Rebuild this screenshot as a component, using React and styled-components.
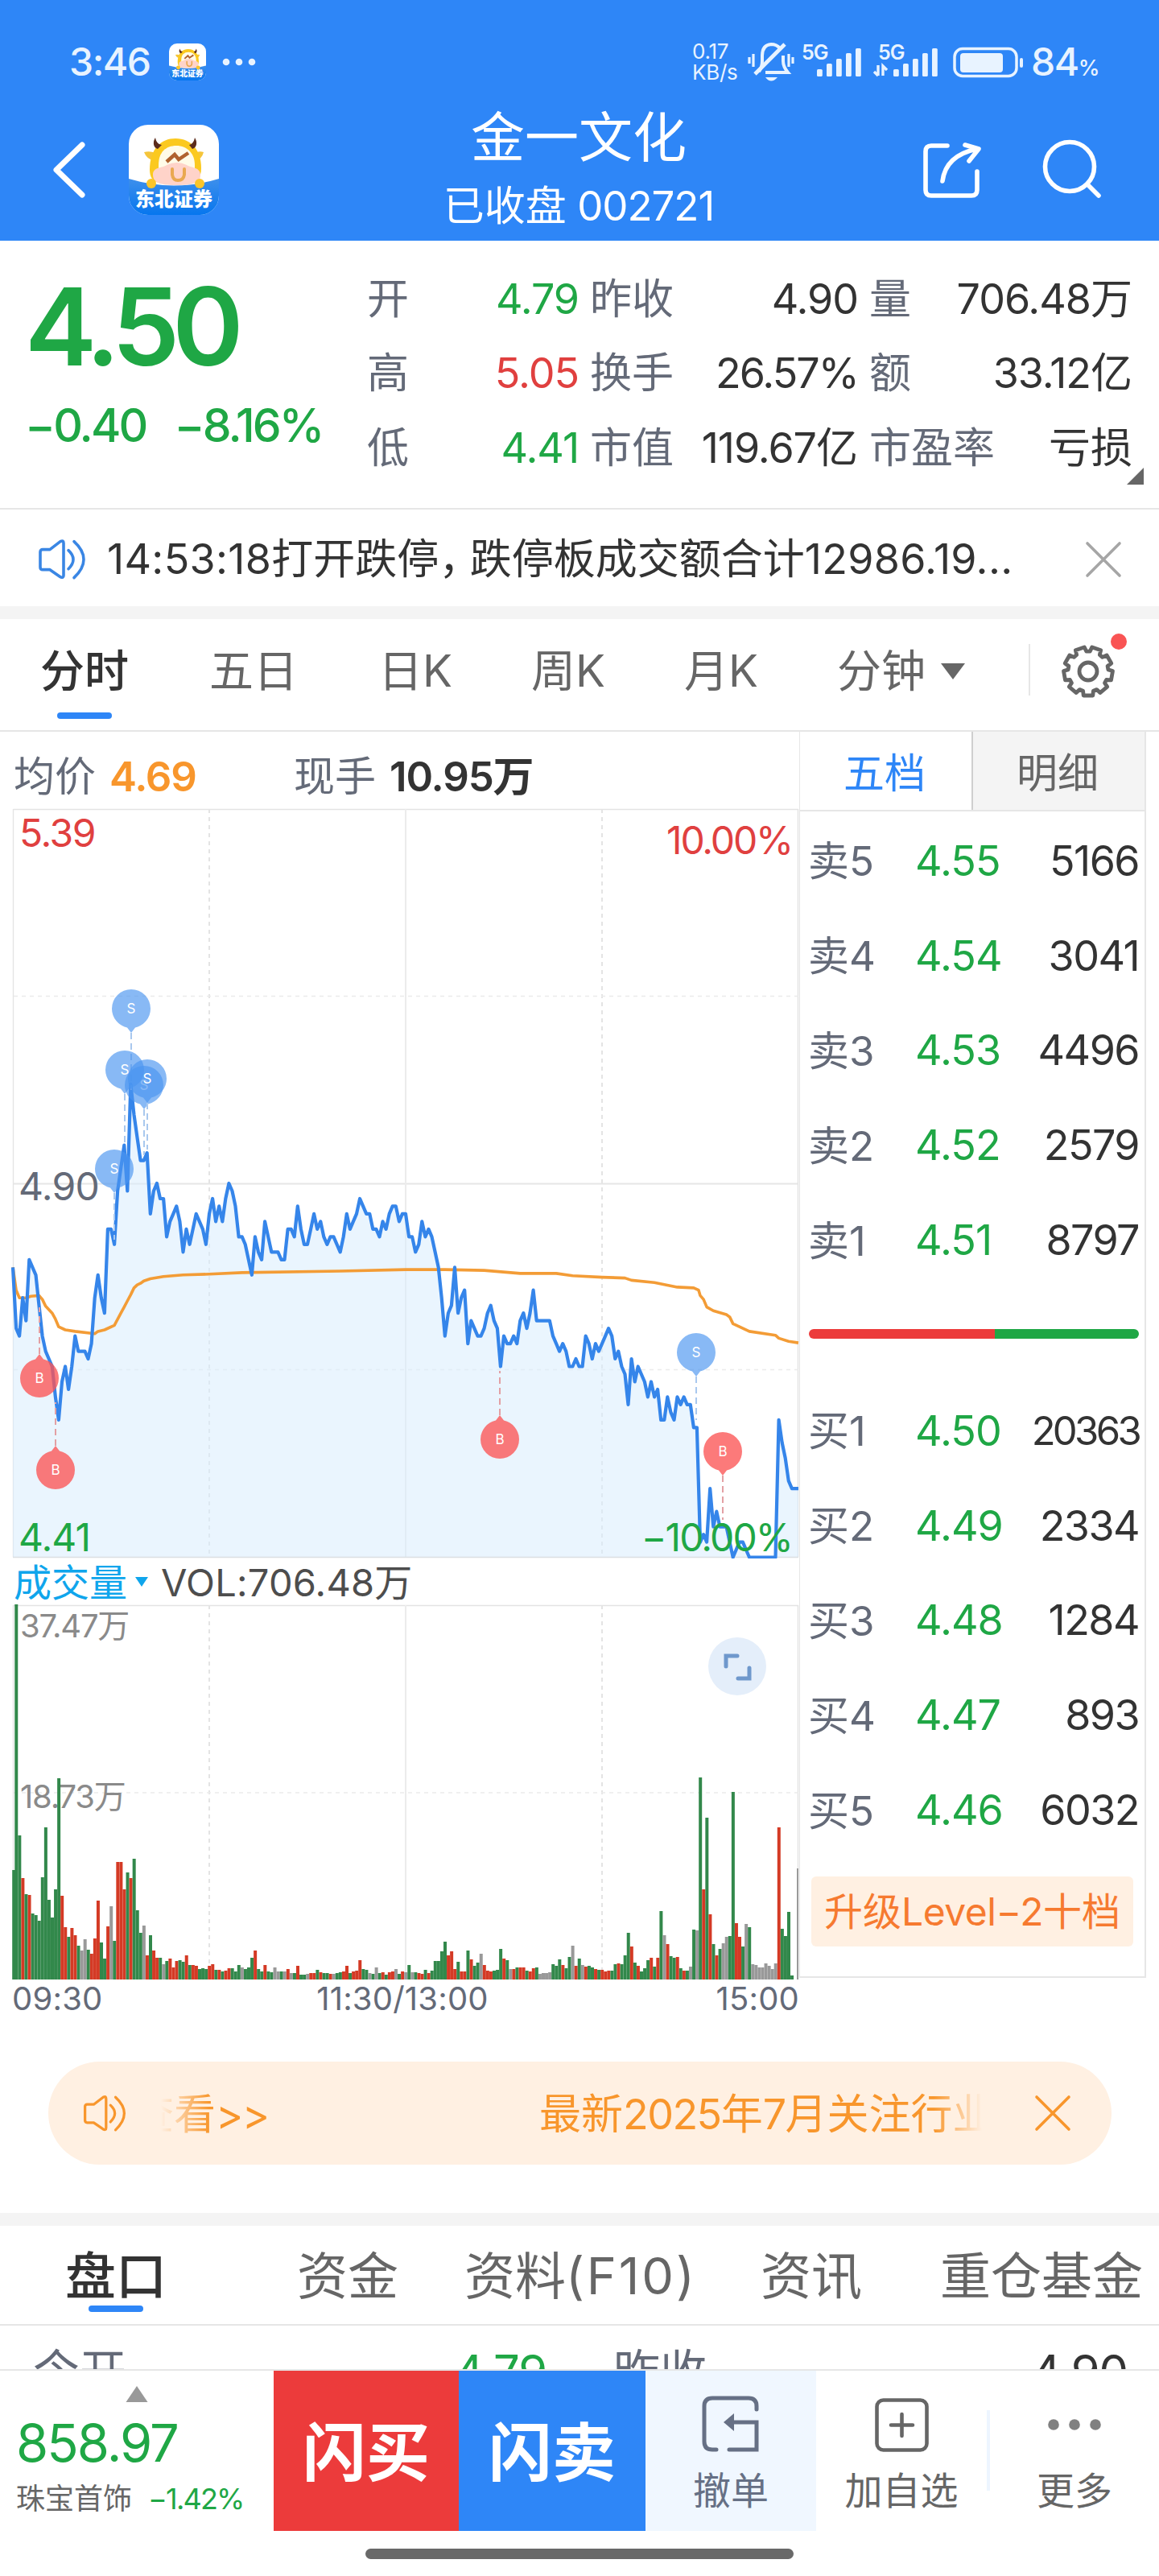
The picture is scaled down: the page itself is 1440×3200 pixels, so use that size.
import styled, { createGlobalStyle } from "styled-components";

const GlobalStyle = createGlobalStyle`
    * {
        box-sizing: border-box;
        margin: 0;
        padding: 0;
    }

    body {
        background: #fff;
        font-family: "Inter", "Noto Sans CJK SC", sans-serif;
        color: #333;
    }
`;

const colors = {
    blue: "#2e86f7",
    green: "#1fa745",
    red: "#e0403f",
    label: "#646a78",
    text: "#333333",
    grey: "#666666",
    line: "#e6e6e6",
    band: "#f4f4f4",
    orange: "#f8962c",
};

/* cents above / below yesterday's close, one value per minute */
const PRICES = [
    -11, -19, -20, -15, -18, -10, -11, -12, -16, -20, -22, -23, -24, -28, -31, -26, -24, -27, -24, -20,
    -22, -22, -22, -23, -21, -15, -12, -15, -17, -6, -6, -8, -1, 2, 5, -1, 13, 9, 6, 3,
    3, 4, -4, -1, 0, -2, -2, -7, -5, -4, -3, -5, -9, -6, -8, -6, -4, -5, -6, -8,
    -4, -2, -5, -3, -5, -2, 0, -1, -3, -7, -7, -8, -10, -12, -7, -9, -10, -5, -7, -9,
    -9, -9, -10, -10, -6, -6, -7, -3, -6, -8, -8, -6, -4, -6, -5, -7, -8, -7, -7, -8,
    -9, -7, -4, -6, -5, -4, -2, -3, -4, -4, -6, -6, -7, -5, -6, -4, -3, -3, -5, -4,
    -4, -7, -7, -9, -8, -5, -7, -6, -7, -9, -11, -15, -20, -17, -16, -11, -17, -15, -14, -21,
    -18, -19, -20, -20, -19, -17, -16, -18, -19, -24, -20, -21, -21, -20, -21, -18, -17, -19, -17, -14,
    -18, -18, -18, -18, -18, -20, -21, -22, -21, -22, -24, -24, -23, -24, -24, -20, -21, -23, -21, -22,
    -21, -20, -19, -20, -23, -22, -24, -25, -29, -23, -26, -24, -25, -26, -28, -26, -28, -27, -31, -31,
    -28, -30, -31, -28, -29, -28, -29, -29, -32, -32, -47, -46, -47, -40, -45, -43, -45, -45, -45, -47,
    -49, -48, -47, -47, -48, -49, -49, -49, -49, -49, -49, -49, -49, -49, -31, -34, -36, -39, -40, -40,
    -40,
];

const AVERAGE = [
    [0, -11], [1, -14], [2, -15], [4, -15], [5.5, -14.8], [8, -14.7], [9, -15.2], [10, -16.1], [12, -17],
    [13, -17.8], [14, -18.8], [16, -19.2], [19, -19.4], [25, -19.7], [26, -19.4], [28, -19.2], [31, -18.6],
    [33, -17], [34, -16.2], [35, -15.4], [36, -14.6], [37, -13.7], [38, -13.3], [39, -13.1], [40, -12.8],
    [42, -12.5], [46, -12.2], [52, -12], [60, -11.9], [70, -11.7], [100, -11.5], [120, -11.3], [132, -11.3],
    [144, -11.4], [155, -11.8], [166, -11.8], [171, -12.1], [180, -12.3], [187, -12.4], [189, -12.7],
    [196, -13], [203, -13.6], [208, -13.7], [209.5, -14], [210, -14.7], [211, -15.2], [212, -16.2],
    [214, -16.7], [218, -17.2], [219, -17.5], [220, -18.4], [222, -18.8], [225, -19.4], [233, -19.9],
    [234, -20.3], [237, -20.7], [240, -20.9],
];

/* g = down minute, r = up minute, y = flat */
const VOLUMES = `
    g136 g467 g179 r126 g106 r105 g82 g80 g73 g127 g189 g99 g77 g112 g250 r104 r65 g53 r64 r55
    g42 y36 y50 g37 r32 r51 r98 g46 g26 r66 y91 g48 r146 r146 r112 g133 r126 g150 g86 g58
    y67 r30 g55 r36 r27 g27 y19 g23 r26 r15 r23 g24 g22 r30 g18 r18 r17 g13 g14 g13
    r17 r19 g12 r12 g10 r11 r14 g14 g10 g18 y15 g13 g15 g27 r36 g13 g10 r18 g10 g9
    y15 y10 g10 y10 r13 y8 g8 r17 g6 g6 y7 r8 r8 g12 r9 g8 g8 r7 y7 g8
    g9 r10 r17 g8 r10 r11 r24 g13 g12 y8 g7 y15 g8 r9 g6 r9 r10 y13 g7 r10
    y9 g18 y9 g9 r8 r7 g12 r8 g11 g23 g23 g35 g47 r30 r35 r13 g22 r10 r10 g36
    r25 g17 g21 y32 r18 r11 r10 g11 g12 g38 r26 g24 y13 r13 g15 r15 r15 g11 r10 r14
    g15 y7 y8 y8 y9 g19 g17 g25 r18 g14 g28 y42 r17 g26 y18 r16 g17 g15 r13 g12
    r12 r10 r11 g11 g19 r20 g19 g30 g58 r41 g21 r17 g10 g14 g24 r27 g16 r27 g85 y55
    r44 g29 g27 r28 g14 r11 g11 y16 g62 y61 g251 r112 g201 r81 g44 r30 g38 y45 y53 g54
    g233 r70 r53 g41 y69 g65 y19 y18 y15 y15 y20 y17 y13 y20 r189 g63 g54 g84 g5 g0
    y138
`.trim().split(/\s+/);

const BAR_FILL = { g: "#32884b", r: "#d43a25", y: "#999999" };

const MARKERS = [
    { type: "S", x: 163, y: 249, end: 350 },
    { type: "S", x: 155, y: 325, end: 418 },
    { type: "S", x: 179, y: 344, end: 431 },
    { type: "S", x: 183, y: 336, end: 424 },
    { type: "S", x: 142, y: 448, end: 536 },
    { type: "B", x: 49, y: 708, end: 620 },
    { type: "B", x: 69, y: 822, end: 738 },
    { type: "B", x: 621, y: 784, end: 699 },
    { type: "S", x: 865, y: 676, end: 760 },
    { type: "B", x: 898, y: 799, end: 884 },
];

const STATS = [
    ["开", "4.79", "green"], ["昨收", "4.90"], ["量", "706.48万"],
    ["高", "5.05", "red"], ["换手", "26.57%"], ["额", "33.12亿"],
    ["低", "4.41", "green"], ["市值", "119.67亿"], ["市盈率", "亏损"],
];

const SELLS = [["卖5", "4.55", "5166"], ["卖4", "4.54", "3041"], ["卖3", "4.53", "4496"], ["卖2", "4.52", "2579"], ["卖1", "4.51", "8797"]];
const BUYS = [["买1", "4.50", "20363"], ["买2", "4.49", "2334"], ["买3", "4.48", "1284"], ["买4", "4.47", "893"], ["买5", "4.46", "6032"]];

const Page = styled.div`
    width: 1440px;
    height: 3200px;
    display: flex;
    flex-direction: column;
    overflow: hidden;
    background: #fff;
    white-space: nowrap;
    line-height: 1;
`;

const Latin = styled.span`
    letter-spacing: -0.03em;
`;

/* tightens digits and latin letters, leaves the Chinese characters alone */
const Txt = ({ children }) =>
    String(children)
        .split(/([\x20-\x7e−]+)/)
        .filter(Boolean)
        .map((part, i) => (/[\x20-\x7e−]/.test(part) ? <Latin key={i}>{part}</Latin> : part));

/* ---------- header ---------- */

const Header = styled.header`
    height: 299px;
    background: ${colors.blue};
    color: #fff;
    flex: none;
`;

const StatusBar = styled.div`
    height: 124px;
    padding: 30px 75px 0 86px;
    display: flex;
    align-items: center;
    color: #e8f3ff;

    svg {
        display: block;
        overflow: visible;
    }
`;

const Clock = styled.span`
    width: 124px;
    font-size: 48px;
    font-weight: 500;
`;

const StatusRight = styled.div`
    margin-left: auto;
    display: flex;
    align-items: center;
`;

const Speed = styled.div`
    width: 69px;
    font-size: 26px;
    line-height: 26px;
    letter-spacing: -0.01em;
`;

const Battery = styled.div`
    display: flex;
    align-items: baseline;
    font-size: 48px;
    font-weight: 500;
    margin-left: 10px;

    small {
        font-size: 27px;
        letter-spacing: -0.06em;
    }
`;

const TitleBar = styled.div`
    height: 175px;
    padding: 0 69px 0 64px;
    display: grid;
    grid-template-columns: 480px 1fr 477px;

    svg {
        display: block;
    }
`;

const TitleSide = styled.div`
    display: flex;
    padding-top: 31px;
    gap: ${(p) => p.$gap};
    justify-content: ${(p) => (p.$right ? "flex-end" : "flex-start")};
`;

const Title = styled.div`
    display: flex;
    flex-direction: column;
    align-items: center;
    padding-top: 2px;

    h1 {
        font-size: 67px;
        line-height: 90px;
        font-weight: 400;
    }

    p {
        font-size: 51px;
        line-height: 80px;
    }

    ${Latin} {
        letter-spacing: -0.02em;
    }
`;

const AppLogo = ({ size }) => (
    <svg width={size} height={size} viewBox="0 0 112 112">
        <defs>
            <clipPath id={`logo${size}`}>
                <rect width="112" height="112" rx="24" />
            </clipPath>
            <linearGradient id={`sea${size}`} x1="0" y1="0" x2="0" y2="1">
                <stop offset="0" stopColor="#3d8fec" />
                <stop offset="1" stopColor="#0676ee" />
            </linearGradient>
        </defs>
        <g clipPath={`url(#logo${size})`}>
            <rect width="112" height="112" fill="#fff" />
            <path d="M0 67 Q56 84 112 67 V112 H0 Z" fill={`url(#sea${size})`} />
            <path d="M19 34 Q26 32 33 35 L30 44 Q22 42 19 34 Z M93 34 Q88 32 81 35 L84 44 Q91 42 93 34 Z" fill="#f5c53a" />
            <path d="M26 56 C26 30 40 17 58 17 C78 17 90 32 90 54 Q90 70 76 72 H38 Q26 70 26 56 Z" fill="#fbc91f" />
            <path d="M33 16 C29 22 31 29 36 30 L41 25 C36 24 34 21 33 16 Z M82 16 C86 22 84 29 79 30 L75 25 C79 24 81 21 82 16 Z" fill="#5c2c1c" />
            <path d="M37 50 C37 34 46 26 59 26 C73 26 82 36 82 50 V60 H37 Z" fill="#fffbe8" />
            <path d="M30 62 C30 52 42 54 47 50 Q60 44 72 50 C78 54 89 52 89 63 C89 74 74 75 59 75 C44 75 30 74 30 62 Z" fill="#ffd3c9" />
            <path d="M47 46 L57 37 L62 43 L74 35" fill="none" stroke="#b0622e" strokeWidth="4.5" />
            <path d="M54 55 V62 Q55 69 61 69 Q68 69 69 62 V55" fill="none" stroke="#e9a850" strokeWidth="4" strokeLinecap="round" />
            <circle cx="28" cy="73" r="6" fill="#fbc52a" />
            <circle cx="88" cy="73" r="6" fill="#fbc52a" />
            <text x="56" y="101" fontSize="24" fontWeight="900" fill="#fff" textAnchor="middle">东北证券</text>
        </g>
    </svg>
);

const Signal = ({ arrows }) => (
    <svg width={arrows ? 80 : 75} height="48" viewBox={arrows ? "-5 0 80 48" : "0 0 75 48"} fill="currentColor">
        <text x="-1" y="21" fontSize="25" fontWeight="600" letterSpacing="-1">5G</text>
        {arrows && <path d="M-1 41 V28 M-6 36 L-1 41 M5 41 V29 L10 34" fill="none" stroke="currentColor" strokeWidth="3.4" />}
        {[9, 16, 22, 29, 35].map((h, i) => (
            <rect key={i} x={18 + i * 12} y={42 - h} width="6.8" height={h} rx="1.6" />
        ))}
    </svg>
);

const StatusIcons = () => (
    <>
        <svg width="68" height="52" viewBox="0 0 68 52" fill="none" stroke="currentColor" strokeWidth="4">
            <path d="M14 38 Q18 32 18 25 V18 Q18 5 29 4 Q36 4 40 9" />
            <path d="M44 18 V25 Q44 32 50 39 H22" />
            <path d="M9 41 L46 4" strokeWidth="4.8" />
            <path d="M7 16 V32 M2 20 V28 M51 16 V32 M56 20 V28" strokeWidth="3.2" />
            <path d="M22 45 Q29 54 37 45 Z" fill="currentColor" stroke="none" />
        </svg>
        <Signal />
        <svg width="15" height="10" />
        <Signal arrows />
        <svg width="104" height="44" viewBox="0 0 104 44" fill="none" stroke="currentColor">
            <rect x="19" y="5.5" width="77" height="34" rx="10" strokeWidth="3.5" />
            <rect x="26" y="11" width="53" height="24" rx="4" fill="currentColor" stroke="none" />
            <rect x="100" y="17" width="4" height="12" rx="2" fill="currentColor" stroke="none" />
        </svg>
    </>
);

/* ---------- quote ---------- */

const Quote = styled.section`
    height: 334px;
    flex: none;
    display: flex;
    border-bottom: 2px solid ${colors.line};
    position: relative;
`;

const PriceBlock = styled.div`
    width: 456px;
    padding: 39px 0 0 31px;
    color: ${colors.green};
`;

const Price = styled.div`
    font-size: 134px;
    line-height: 134px;
    font-weight: 600;
    letter-spacing: -0.068em;
`;

const Change = styled.div`
    display: flex;
    gap: 35px;
    margin-top: 23px;
    font-size: 57px;
    line-height: 68px;
    font-weight: 500;
    letter-spacing: -0.05em;
`;

const Stats = styled.div`
    display: grid;
    grid-template-columns: 261px 331px 325px;
    grid-auto-rows: 92.3px;
    column-gap: 16px;
    padding-top: 27px;
`;

const Stat = styled.div`
    display: flex;
    align-items: center;
    justify-content: space-between;
    font-size: 52px;
    color: ${colors.label};

    b {
        font-weight: 400;
        margin-right: -2px;
        color: ${(p) => colors[p.$tone] || colors.text};
    }

    ${Latin} {
        letter-spacing: ${(p) => (p.$wide ? "-0.037em" : "-0.02em")};
    }
`;

const Corner = styled.i`
    position: absolute;
    right: 19px;
    bottom: 29px;
    border-left: 21px solid transparent;
    border-bottom: 21px solid ${colors.grey};
`;

/* ---------- notice ---------- */

const Notice = styled.section`
    height: 120px;
    flex: none;
    display: flex;
    align-items: center;
    padding: 4px 46px 0 46px;
    font-size: 52px;

    svg {
        flex: none;
    }

    p {
        flex: 1;
        margin-left: 25px;
    }

    ${Latin} {
        letter-spacing: 0.006em;
    }
`;

const Comma = styled.span`
    letter-spacing: -0.26em;
`;

const Band = styled.div`
    height: 16px;
    flex: none;
    background: ${colors.band};
`;

const SpeakerIcon = ({ size, color }) => (
    <svg width={size} height={size * 0.86} viewBox="0 0 62 52" fill="none" stroke={color} strokeWidth="3.6" strokeLinecap="round" strokeLinejoin="round">
        <path d="M4 17 Q4 14 7 14 H16 L29 4 Q33 2 33 6 V46 Q33 50 29 48 L16 39 H7 Q4 39 4 36 Z" />
        <path d="M39 15 Q51 26 39 38 M46 4 Q70 26 46 49" />
    </svg>
);

const CloseIcon = ({ color, size = 46, width = 3.6 }) => (
    <svg width={size} height={size} viewBox="0 0 46 46" stroke={color} strokeWidth={width} strokeLinecap="round">
        <path d="M3 3 L43 43 M43 3 L3 43" />
    </svg>
);

/* ---------- tabs ---------- */

const Tabs = styled.nav`
    height: ${(p) => p.$height};
    flex: none;
    display: flex;
    border-bottom: 2px solid ${colors.line};
    font-size: ${(p) => p.$size};
    color: ${colors.grey};
    padding-left: ${(p) => p.$left};
`;

const Tab = styled.div`
    width: ${(p) => p.$width};
    flex: none;
    display: flex;
    align-items: center;
    padding-bottom: ${(p) => (p.$low ? "0" : "9px")};
    padding-top: ${(p) => (p.$low ? "3px" : "0")};

    ${Latin} {
        letter-spacing: ${(p) => p.$tracking || "-0.03em"};
    }
`;

const ActiveTab = styled(Tab)`
    color: ${colors.text};
    font-weight: 500;

    span {
        position: relative;
    }

    span::after {
        content: "";
        position: absolute;
        left: 50%;
        bottom: ${(p) => p.$drop};
        width: 68px;
        height: 8px;
        margin-left: -34px;
        border-radius: 4px;
        background: ${colors.blue};
    }
`;

const Caret = styled.i`
    border: ${(p) => p.$size} solid transparent;
    border-top: ${(p) => p.$tall} solid ${(p) => p.$color};
    border-bottom: 0;
    margin-left: ${(p) => p.$gap};
`;

const Settings = styled.div`
    position: relative;
    width: 160px;
    height: 64px;
    margin-top: 31px;
    padding-left: 38px;
    border-left: 2px solid ${colors.line};

    &::after {
        content: "";
        position: absolute;
        left: 100px;
        top: -13px;
        width: 20px;
        height: 20px;
        border-radius: 50%;
        background: #f95454;
    }
`;

/* nine blunt teeth round a ring, one of them straight down */
const gearPath = () => {
    const n = 9;
    const pts = [];
    for (let i = 0; i < n; i++) {
        const a = (i / n) * Math.PI * 2 + Math.PI / 2;
        [[-0.26, 25], [-0.19, 30.5], [0.19, 30.5], [0.26, 25]].forEach(([d, r]) => {
            pts.push(`${(34 + Math.cos(a + d) * r).toFixed(1)} ${(34 + Math.sin(a + d) * r).toFixed(1)}`);
        });
    }
    return `M${pts.join("L")}Z`;
};

const GearIcon = () => (
    <svg width="68" height="68" viewBox="0 0 68 68" fill="none" stroke={colors.grey} strokeWidth="4.8" strokeLinejoin="round">
        <path d={gearPath()} />
        <circle cx="34" cy="34" r="11" />
    </svg>
);

/* ---------- chart ---------- */

const Main = styled.main`
    height: 1652px;
    flex: none;
    display: flex;
`;

const ChartColumn = styled.div`
    width: 993px;

    svg {
        display: block;
    }
`;

const InfoRow = styled.div`
    height: 95px;
    padding: 15px 0 0 17px;
    display: flex;
    align-items: center;
    font-size: 51px;
    color: ${colors.label};
`;

const InfoItem = styled.div`
    width: ${(p) => p.$width};

    b {
        margin-left: 17px;
        font-weight: 600;
        color: ${(p) => p.$color};
    }

    ${Latin} {
        letter-spacing: -0.022em;
    }
`;

const VolumeRow = styled.div`
    height: 57px;
    padding: 1px 0 0 17px;
    display: flex;
    align-items: center;
    font-size: 47px;
    color: #0fa5ec;

    p {
        margin-left: 16px;
        color: #4d4d4d;
    }

    ${Latin} {
        letter-spacing: 0.005em;
    }
`;

const TimeAxis = styled.div`
    height: 46px;
    padding: 0 0 0 15px;
    display: grid;
    grid-template-columns: 1fr 1fr 1fr;
    align-items: center;
    font-size: 40px;
    color: ${colors.label};

    ${Latin} {
        letter-spacing: 0.005em;
    }

    > span:nth-child(2) {
        text-align: center;
        margin-left: -8px;
    }

    > span:nth-child(3) {
        text-align: right;
    }
`;

const AxisText = styled.text`
    font-size: ${(p) => p.$size || "48px"};
    letter-spacing: ${(p) => p.$tracking || "-0.03em"};
    fill: ${(p) => p.$fill};
`;

const minuteX = (i) => 16 + (i * 976) / 240;
const centY = (c) => 466 - c * 9.48;

const Grid = ({ bottom, mid }) => (
    <g fill="none" stroke="#e4e4e4">
        <path d={`M16.5 1.5 H992 M16.5 1 V${bottom}`} strokeWidth="1.4" />
        <path d={`M504 1 V${bottom}`} strokeWidth="2" stroke="#ececec" />
        <path d={`M991.5 1 V${bottom}`} strokeWidth="1.6" />
        <path d={`M260 1 V${bottom} M748 1 V${bottom}`} strokeWidth="2" strokeDasharray="5 5" />
        {mid.map((y) => (
            <path key={y} d={`M17 ${y} H992`} strokeWidth="1.6" strokeDasharray="5 5" stroke="#ebebeb" />
        ))}
    </g>
);

const Marker = ({ type, x, y, end }) => {
    const isSell = type === "S";
    const dir = end > y ? 1 : -1;
    const sweep = dir > 0 ? 1 : 0;
    return (
        <g>
            <path d={`M${x} ${y + dir * 30} V${end}`} stroke={isSell ? "#a9c8ee" : "#e3a0a4"} strokeWidth="2" strokeDasharray="8 5" />
            <path
                d={`M${x - 24} ${y} A24 24 0 0 ${sweep} ${x + 24} ${y} A24 24 0 0 ${sweep} ${x + 5} ${y + dir * 23.4} L${x} ${y + dir * 30} L${x - 5} ${y + dir * 23.4} A24 24 0 0 ${sweep} ${x - 24} ${y} Z`}
                fill={isSell ? "#4a94f0" : "#fb5555"}
                opacity={isSell ? 0.66 : 0.78}
            />
            <text x={x} y={y + 6} fontSize="17" fill="#fff" textAnchor="middle">{type}</text>
        </g>
    );
};

const PriceChart = () => {
    const line = PRICES.map((c, i) => `${minuteX(i).toFixed(1)},${centY(c).toFixed(1)}`).join(" ");
    const average = AVERAGE.map(([m, c]) => `${minuteX(m).toFixed(1)},${centY(c).toFixed(1)}`).join(" ");
    return (
        <svg width="993" height="932" viewBox="0 0 993 932">
            <path d="M16.5 466.5 H992" stroke="#e6e6e6" strokeWidth="2" />
            <Grid bottom={930} mid={[233.5, 697.5]} />
            <polygon points={`16,930 ${line} 992,930`} fill="#d8edfd" opacity="0.55" />
            <path d="M16 930.5 H992" stroke="#dcdfe2" strokeWidth="1.6" />
            <polyline points={average} fill="none" stroke="#f39c36" strokeWidth="3.6" strokeLinejoin="round" />
            <AxisText x="23" y="487" $tracking="-0.015em" $fill={colors.label}>4.90</AxisText>
            <polyline points={line} fill="none" stroke="#3585ea" strokeWidth="4.2" strokeLinejoin="round" />
            {MARKERS.map((m) => <Marker key={m.x} {...m} />)}
            <AxisText x="24" y="48" $fill={colors.red}>5.39</AxisText>
            <AxisText x="984" y="57" textAnchor="end" $tracking="-0.045em" $fill={colors.red}>10.00%</AxisText>
            <AxisText x="23" y="923" $tracking="-0.02em" $fill={colors.green}>4.41</AxisText>
            <AxisText x="984" y="923" textAnchor="end" $tracking="-0.04em" $fill={colors.green}>−10.00%</AxisText>
        </svg>
    );
};

const VolumeChart = () => (
    <svg width="993" height="467" viewBox="0 0 993 467">
        <Grid bottom={466} mid={[234]} />
        <AxisText x="25" y="41" $size="40px" $fill="#8a8a8a">37.47<tspan letterSpacing="0">万</tspan></AxisText>
        <AxisText x="25" y="253" $size="40px" $fill="#8a8a8a">18.73<tspan letterSpacing="0">万</tspan></AxisText>
        {VOLUMES.map((v, i) => {
            const h = Number(v.slice(1));
            return <rect key={i} x={minuteX(i) - (i === 240 ? 2 : 1.8) + (i === 0 ? 1 : 0)} y={466 - h} width={i === 240 ? 2 : 4} height={h} fill={BAR_FILL[v[0]]} />;
        })}
        <circle cx="916" cy="77" r="36" fill="#e4eefa" />
        <path d="M902 77 V64 H916 M917 92 H931 V79" fill="none" stroke="#6f98cc" strokeWidth="5" strokeLinecap="round" />
    </svg>
);

/* ---------- order book ---------- */

const Book = styled.aside`
    width: 431px;
    height: 1548px;
    border: 2px solid ${colors.line};
    border-top: 0;
    border-left-width: 1px;
`;

const BookTabs = styled.div`
    display: flex;
    height: 99px;
    margin-bottom: 3px;
    border-bottom: 2px solid ${colors.line};
`;

const BookTab = styled.div`
    width: ${(p) => (p.$active ? "213px" : "215px")};
    display: flex;
    align-items: center;
    justify-content: center;
    padding: 6px 3px 0 0;
    font-size: 51px;
    color: ${(p) => (p.$active ? colors.blue : colors.grey)};
    background: ${(p) => (p.$active ? "#fff" : colors.band)};
    border-left: ${(p) => (p.$active ? "0" : "2px solid #cfcfcf")};
`;

const Level = styled.div`
    height: 117.8px;
    display: grid;
    grid-template-columns: 133px 1fr auto;
    align-items: center;
    padding: 0 7px 0 10px;
    font-size: 51px;
    color: ${colors.label};

    b {
        font-size: 52px;
        font-weight: 400;
        color: ${colors.green};
    }

    b ${Latin} {
        letter-spacing: -0.018em;
    }

    em {
        font-style: normal;
        font-size: ${(p) => (p.$long ? "49px" : "52px")};
        color: ${colors.text};
    }

    em ${Latin} {
        letter-spacing: ${(p) => (p.$long ? "-0.075em" : "-0.03em")};
    }
`;

const Ratio = styled.div`
    height: 12px;
    margin: 51px 7px 56px 11px;
    border-radius: 6px;
    background: linear-gradient(90deg, #ec3b3b 0 56.3%, ${colors.green} 56.3%);
`;

const Upgrade = styled.button`
    display: flex;
    align-items: center;
    justify-content: center;
    width: 400px;
    height: 87px;
    margin: 23px 0 0 14px;
    padding-top: 1px;
    border: 0;
    border-radius: 6px;
    background: #fff0e2;
    color: #f67a30;
    font: inherit;
    font-size: 48px;

    ${Latin} {
        letter-spacing: -0.01em;
    }
`;

/* ---------- banner ---------- */

const Banner = styled.section`
    height: 128px;
    flex: none;
    margin: 0 59px 60px 60px;
    padding: 0 50px 0 42px;
    border-radius: 64px;
    background: #fff0e2;
    color: ${colors.orange};
    font-size: 52px;
    display: flex;
    align-items: center;
`;

const Marquee = styled.div`
    width: 1020px;
    height: 70px;
    margin: 4px auto 0 42px;
    display: flex;
    align-items: center;
    overflow: hidden;
    mask-image: linear-gradient(90deg, transparent, #000 60px, #000 calc(100% - 60px), transparent);

    > span:first-child {
        width: 506px;
        margin-left: -36px;
        flex: none;
    }
`;

/* ---------- bottom ---------- */

const Details = styled.section`
    height: 54px;
    flex: none;
    overflow: hidden;
    display: grid;
    grid-template-columns: 638px 639px;
    column-gap: 83px;
    padding: 23px 0 0 41px;
    font-size: 58px;
    color: ${colors.label};

    div {
        display: flex;
        justify-content: space-between;
        line-height: 68px;
    }

    ${Latin} {
        letter-spacing: -0.02em;
    }
`;

const DetailValue = styled.b`
    font-weight: 400;
    color: ${(p) => p.$tone};
`;

const Toolbar = styled.footer`
    height: 201px;
    flex: none;
    display: flex;
    border-top: 2px solid ${colors.line};
`;

const Sector = styled.div`
    width: 340px;
    padding: 19px 0 0 20px;
    color: ${colors.green};

    svg {
        display: block;
        margin: 0 0 17px 136px;
    }

    strong {
        display: block;
        font-size: 65px;
        line-height: 68px;
        font-weight: 400;
    }

    p {
        display: flex;
        gap: 20px;
        margin-top: 15px;
        font-size: 36px;
        line-height: 40px;
    }

    p > span:first-child {
        color: ${colors.grey};
    }

    p ${Latin} {
        letter-spacing: -0.05em;
    }
`;

const Trade = styled.button`
    width: ${(p) => p.$width};
    padding-top: 5px;
    border: 0;
    background: ${(p) => p.$bg};
    color: #fff;
    font: inherit;
    font-size: 79px;
    font-weight: 700;
`;

const Action = styled.div`
    width: ${(p) => p.$width};
    display: flex;
    flex-direction: column;
    align-items: center;
    padding-top: 30px;
    font-size: 47px;
    color: ${(p) => p.$color || colors.grey};
    background: ${(p) => p.$bg || "transparent"};

    svg {
        display: block;
        margin-bottom: 23px;
    }
`;

const Divider = styled.i`
    width: 4px;
    height: 100px;
    margin-top: 49px;
    background: #edf5ff;
`;

const HomeIndicator = styled.div`
    width: 532px;
    height: 13px;
    flex: none;
    margin: 22px 0 0 454px;
    border-radius: 7px;
    background: #696969;
`;

const App = () => {
    return (
        <Page>
            <GlobalStyle />
            <Header>
                <StatusBar>
                    <Clock><Txt>3:46</Txt></Clock>
                    <AppLogo size={46} />
                    <svg width="80" height="10" fill="currentColor">
                        <circle cx="25" cy="5" r="4.3" />
                        <circle cx="41" cy="5" r="4.3" />
                        <circle cx="57" cy="5" r="4.3" />
                    </svg>
                    <StatusRight>
                        <Speed>0.17<br />KB/s</Speed>
                        <StatusIcons />
                        <Battery><Txt>84</Txt><small>%</small></Battery>
                    </StatusRight>
                </StatusBar>
                <TitleBar>
                    <TitleSide $gap="50px">
                        <svg width="46" height="112" fill="none" stroke="#fff" strokeWidth="7" strokeLinecap="round" strokeLinejoin="round">
                            <path d="M38 25 L6 56 L38 87" />
                        </svg>
                        <AppLogo size={112} />
                    </TitleSide>
                    <Title>
                        <h1>金一文化</h1>
                        <p><Txt>已收盘 002721</Txt></p>
                    </Title>
                    <TitleSide $right $gap="70px">
                        <svg width="76" height="112" fill="none" stroke="#fff" strokeWidth="5.6" strokeLinecap="round" strokeLinejoin="round">
                            <path d="M32 26 H12 Q5 26 5 33 V81 Q5 88 12 88 H62 Q69 88 69 81 V58" />
                            <path d="M26 70 Q30 38 69 30 M54 25 L71 30 L59 45" />
                        </svg>
                        <svg width="80" height="112" fill="none" stroke="#fff" strokeWidth="5.6" strokeLinecap="round">
                            <circle cx="38" cy="52" r="30.5" />
                            <path d="M60 74 L74 88" />
                        </svg>
                    </TitleSide>
                </TitleBar>
            </Header>

            <Quote>
                <PriceBlock>
                    <Price>4.50</Price>
                    <Change>
                        <span>−0.40</span>
                        <span>−8.16%</span>
                    </Change>
                </PriceBlock>
                <Stats>
                    {STATS.map(([label, value, tone]) => (
                        <Stat key={label} $tone={tone} $wide={value.includes("%")}>
                            <span>{label}</span>
                            <b><Txt>{value}</Txt></b>
                        </Stat>
                    ))}
                </Stats>
                <Corner />
            </Quote>

            <Notice>
                <SpeakerIcon size={62} color="#3a86e4" />
                <p>
                    <Txt>14:53:18打开跌停</Txt>
                    <Comma>，</Comma>
                    <Txt>跌停板成交额合计12986.19...</Txt>
                </p>
                <CloseIcon color="#a6a6a6" />
            </Notice>
            <Band />

            <Tabs $height="140px" $size="55px" $left="50px">
                <ActiveTab $width="210px" $drop="-32px"><span>分时</span></ActiveTab>
                <Tab $width="210px">五日</Tab>
                <Tab $width="190px"><Txt>日K</Txt></Tab>
                <Tab $width="190px"><Txt>周K</Txt></Tab>
                <Tab $width="190px"><Txt>月K</Txt></Tab>
                <Tab $width="238px">
                    分钟
                    <Caret $size="15.5px" $tall="20px" $gap="19px" $color={colors.grey} />
                </Tab>
                <Settings><GearIcon /></Settings>
            </Tabs>

            <Main>
                <ChartColumn>
                    <InfoRow>
                        <InfoItem $width="348px" $color={colors.orange}>均价<b><Txt>4.69</Txt></b></InfoItem>
                        <InfoItem $color={colors.text}>现手<b><Txt>10.95万</Txt></b></InfoItem>
                    </InfoRow>
                    <PriceChart />
                    <VolumeRow>
                        成交量
                        <Caret $size="8px" $tall="12px" $gap="10px" $color="#0fa5ec" />
                        <p><Txt>VOL:706.48万</Txt></p>
                    </VolumeRow>
                    <VolumeChart />
                    <TimeAxis>
                        <span><Txt>09:30</Txt></span>
                        <span><Txt>11:30/13:00</Txt></span>
                        <span><Txt>15:00</Txt></span>
                    </TimeAxis>
                </ChartColumn>
                <Book>
                    <BookTabs>
                        <BookTab $active>五档</BookTab>
                        <BookTab>明细</BookTab>
                    </BookTabs>
                    {SELLS.map(([label, price, count]) => (
                        <Level key={label}>
                            <span>{label}</span>
                            <b><Txt>{price}</Txt></b>
                            <em><Txt>{count}</Txt></em>
                        </Level>
                    ))}
                    <Ratio />
                    {BUYS.map(([label, price, count]) => (
                        <Level key={label} $long={count.length > 4}>
                            <span>{label}</span>
                            <b><Txt>{price}</Txt></b>
                            <em><Txt>{count}</Txt></em>
                        </Level>
                    ))}
                    <Upgrade><span><Txt>升级Level−2十档</Txt></span></Upgrade>
                </Book>
            </Main>

            <Banner>
                <SpeakerIcon size={56} color={colors.orange} />
                <Marquee>
                    <span><Txt>查看&gt;&gt;</Txt></span>
                    <span><Txt>最新2025年7月关注行业</Txt></span>
                </Marquee>
                <CloseIcon color={colors.orange} />
            </Banner>
            <Band />

            <Tabs $height="124px" $size="63px" $left="81px">
                <ActiveTab $width="288px" $drop="-13px" $low><span>盘口</span></ActiveTab>
                <Tab $width="208px" $low>资金</Tab>
                <Tab $width="368px" $low $tracking="0.045em"><Txt>资料(F10)</Txt></Tab>
                <Tab $width="223px" $low>资讯</Tab>
                <Tab $width="260px" $low>重仓基金</Tab>
            </Tabs>
            <Details>
                <div><span>今开</span><DetailValue $tone={colors.green}><Txt>4.79</Txt></DetailValue></div>
                <div><span>昨收</span><DetailValue $tone={colors.text}><Txt>4.90</Txt></DetailValue></div>
            </Details>

            <Toolbar>
                <Sector>
                    <svg width="28" height="20"><path d="M14 0 L27.5 20 H0.5 Z" fill="#999" /></svg>
                    <strong><Txt>858.97</Txt></strong>
                    <p><span>珠宝首饰</span><span><Txt>−1.42%</Txt></span></p>
                </Sector>
                <Trade $width="230px" $bg="#ec3b3b">闪买</Trade>
                <Trade $width="232px" $bg={colors.blue}>闪卖</Trade>
                <Action $width="212px" $color="#667085" $bg="#f0f7ff">
                    <svg width="72" height="72" fill="none" stroke="currentColor" strokeWidth="5" strokeLinecap="round">
                        <path d="M68 18 V14 Q68 4 58 4 H13 Q3 4 3 14 V58 Q3 68 13 68 H18" />
                        <path d="M36 34 H68 V68 H34" />
                        <path d="M27 34 L40 23 V45 Z" fill="currentColor" stroke="none" />
                    </svg>
                    撤单
                </Action>
                <Action $width="212px">
                    <svg width="72" height="72" fill="none" stroke="currentColor" strokeWidth="4.6" strokeLinecap="round">
                        <rect x="5.5" y="6.5" width="62" height="62" rx="8" />
                        <path d="M36.5 24 V51 M23 37.5 H50" />
                    </svg>
                    加自选
                </Action>
                <Divider />
                <Action $width="210px">
                    <svg width="72" height="72" fill="#808080">
                        <circle cx="10" cy="37" r="6.8" />
                        <circle cx="36" cy="37" r="6.8" />
                        <circle cx="62" cy="37" r="6.8" />
                    </svg>
                    更多
                </Action>
            </Toolbar>
            <HomeIndicator />
        </Page>
    );
};

export default App;
